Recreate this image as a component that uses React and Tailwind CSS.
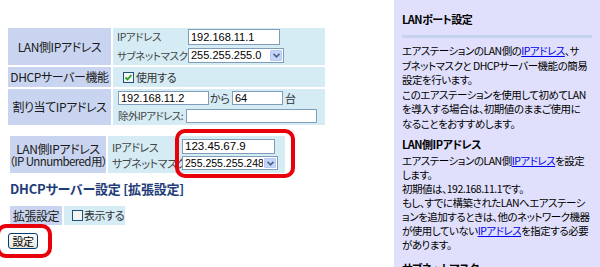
function Input({ w, h, value, size = "text-[11px]" }) {
  return (
    <div
      className={`flex items-center overflow-hidden whitespace-nowrap border border-[#7f9db9] bg-white pl-[2px] font-['Liberation_Sans',sans-serif] leading-none tracking-normal text-black ${size}`}
      style={{ width: w, height: h }}
    >
      {value}
    </div>
  );
}

function Select({ w, h, value, size = "text-[11px]" }) {
  return (
    <div
      className={`flex shrink-0 items-stretch border border-[#7f9db9] bg-white font-['Liberation_Sans',sans-serif] leading-none tracking-normal text-black ${size}`}
      style={{ width: w, height: h }}
    >
      <div className="flex min-w-0 flex-1 items-center overflow-hidden whitespace-nowrap pl-[2px]">{value}</div>
      <div className="m-[1px] flex w-[12px] shrink-0 items-center justify-center rounded-[1px] border border-[#b7c9f0] bg-[#c5d5fb]">
        <svg width="7" height="5" viewBox="0 0 7 5">
          <path d="M0.5 0.8 L3.5 3.8 L6.5 0.8" fill="none" stroke="#4d6185" strokeWidth="1.6" />
        </svg>
      </div>
    </div>
  );
}

function Check({ checked }) {
  return (
    <div className="flex h-[11px] w-[11px] shrink-0 items-center justify-center border border-[#1c5180] bg-[#f4f4f0]">
      {checked && (
        <svg width="9" height="9" viewBox="0 0 9 9">
          <path d="M1.5 4.5 L3.5 6.5 L7.5 2" fill="none" stroke="#21a121" strokeWidth="1.8" />
        </svg>
      )}
    </div>
  );
}

export default function App() {
  return (
    <div className="flex h-[267px] w-[600px] overflow-hidden bg-white font-['Noto_Sans_CJK_JP',sans-serif] text-black [font-feature-settings:'palt']">
      {/* left column */}
      <div className="relative w-[394px] shrink-0 tracking-[-0.4px]">
        {/* table 1 */}
        <div className="ml-[8px] mt-[28px] grid w-fit grid-cols-[103px_212px] gap-[2px] text-[12px] leading-[14px]">
          <div className="flex h-[37px] items-center justify-center whitespace-nowrap bg-[#c9d5f0] text-[#1a1a1a]">LAN側IPアドレス</div>
          <div className="flex flex-col gap-[3px] bg-[#d5ecf5] pl-[4px] pt-[1px]">
            <div className="flex items-center">
              <div className="w-[71px] whitespace-nowrap text-[10.5px] text-[#444]">IPアドレス</div>
              <Input w={92} h={16} value="192.168.11.1" />
            </div>
            <div className="flex items-center">
              <div className="w-[71px] whitespace-nowrap text-[10.5px] text-[#444]">サブネットマスク</div>
              <Select w={96} h={15} value="255.255.255.0" />
            </div>
          </div>

          <div className="flex h-[20px] items-center justify-center whitespace-nowrap bg-[#c9d5f0] text-[#1a1a1a]">DHCPサーバー機能</div>
          <div className="flex items-center gap-[2px] bg-[#d5ecf5] pl-[10px]">
            <Check checked />
            <span className="whitespace-nowrap text-[11px] text-[#333]">使用する</span>
          </div>

          <div className="flex h-[36px] items-center justify-center whitespace-nowrap bg-[#c9d5f0] text-[#1a1a1a]">割り当てIPアドレス</div>
          <div className="flex flex-col gap-[4px] bg-[#d5ecf5] pl-[5px] pt-[2px]">
            <div className="flex items-center">
              <Input w={91} h={14} value="192.168.11.2" />
              <span className="ml-[1px] w-[22px] whitespace-nowrap text-[11px] text-[#333]">から</span>
              <Input w={51} h={14} value="64" />
              <span className="ml-[2px] text-[11px] text-[#333]">台</span>
            </div>
            <div className="flex items-center">
              <div className="w-[68px] whitespace-nowrap text-[10.5px] tracking-[-0.6px] text-[#444]">除外IPアドレス:</div>
              <Input w={131} h={14} value="" />
            </div>
          </div>
        </div>

        {/* table 2 */}
        <div className="ml-[10px] mt-[11px] grid w-fit grid-cols-[96px_177px] gap-[2px] text-[12px] leading-[12px]">
          <div className="flex h-[37px] flex-col items-center justify-center whitespace-nowrap bg-[#c9d5f0] text-[#1a1a1a]">
            <span>LAN側IPアドレス</span>
            <span className="text-[11.5px] tracking-[-0.6px]">（IP Unnumbered用）</span>
          </div>
          <div className="flex flex-col gap-[2px] bg-[#d5ecf5] pl-[4px] pt-[3px]">
            <div className="flex items-center">
              <div className="w-[70px] shrink-0 whitespace-nowrap text-[11px] text-[#444]">IPアドレス</div>
              <Input w={93} h={15} value="123.45.67.9" size="text-[11.5px]" />
            </div>
            <div className="flex items-center">
              <div className="w-[70px] shrink-0 overflow-hidden whitespace-nowrap text-[11px] text-[#444]">サブネットマスク</div>
              <Select w={96} h={14} value="255.255.255.248" size="text-[10.5px]" />
            </div>
          </div>
        </div>

        {/* heading */}
        <div className="ml-[10px] mt-[8px] whitespace-nowrap text-[13px] font-bold leading-[16px] tracking-[-0.2px] text-[#1f3d78]">
          DHCPサーバー設定 [拡張設定]
        </div>

        {/* extended row */}
        <div className="ml-[10px] mt-[9px] flex h-[19px] gap-[2px]">
          <div className="flex w-[52px] items-center justify-center whitespace-nowrap bg-[#c9d5f0] text-[12px] text-[#1a1a1a]">拡張設定</div>
          <div className="flex w-[61px] items-center gap-[1px] bg-[#d5ecf5] pl-[8px]">
            <Check />
            <span className="whitespace-nowrap text-[11px] text-[#333]">表示する</span>
          </div>
        </div>

        {/* button */}
        <div className="ml-[8px] mt-[8px] flex h-[16px] w-[30px] items-center justify-center rounded-[3px] border border-[#003c74] bg-gradient-to-b from-white to-[#e6e4d8] text-[11px] leading-none text-black">
          設定
        </div>

        {/* red highlight rings */}
        <div className="absolute left-[175px] top-[129px] h-[49px] w-[120px] rounded-[10px] border-[4px] border-[#e8000b]" />
        <div className="absolute left-[-4px] top-[224px] h-[34px] w-[56px] rounded-[10px] border-[4px] border-[#e8000b]" />
      </div>

      {/* right help panel */}
      <div className="flex-1 bg-[#e0e0fc] pl-[8px] pr-[8px] pt-[12px] text-[10.5px] leading-[14.5px] tracking-[-0.5px] text-black">
        <div className="text-[11px] font-bold leading-[14px]">LANポート設定</div>
        <div className="mt-[9px] h-[3px] bg-[#c5d3ef]" />
        <div className="mt-[6px] whitespace-nowrap">
          エアステーションのLAN側の<span className="text-[#0000ee] underline">IPアドレス</span>、サ<br />
          ブネットマスクと DHCPサーバー機能の簡易<br />
          設定を行います。<br />
          このエアステーションを使用して初めてLAN<br />
          を導入する場合は、初期値のままご使用に<br />
          なることをおすすめします。
        </div>
        <div className="mt-[6px] text-[11px] font-bold leading-[14px]">LAN側IPアドレス</div>
        <div className="mt-[3px] whitespace-nowrap leading-[14px]">
          エアステーションのLAN側<span className="text-[#0000ee] underline">IPアドレス</span>を設定<br />
          します。<br />
          初期値は、192.168.11.1です。<br />
          もし、すでに構築されたLANへエアステーシ<br />
          ョンを追加するときは、他のネットワーク機器<br />
          が使用していない<span className="text-[#0000ee] underline">IPアドレス</span>を指定する必要<br />
          があります。
        </div>
        <div className="mt-[9px] text-[11px] font-bold leading-[14px]">サブネットマスク</div>
      </div>
    </div>
  );
}
